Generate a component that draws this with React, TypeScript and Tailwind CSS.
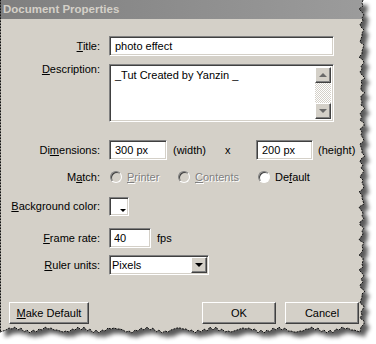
import React from "react";

const sunken =
  "border border-t-[#808080] border-l-[#808080] border-r-white border-b-white shadow-[inset_1px_1px_0_#404040,inset_-1px_-1px_0_#d4d0c8]";
const raised =
  "border border-t-white border-l-white border-r-[#404040] border-b-[#404040] shadow-[inset_-1px_-1px_0_#808080] bg-[#d4d0c8]";

// jagged "torn paper" outline of the screenshot
const tornPoints = () => {
  const pts: string[] = [];
  for (let y = 0; y <= 327; y += 3) {
    const x = 362 + Math.round(1.6 * Math.sin(y * 1.3) + 1.4 * Math.sin(y * 0.41 + 1));
    pts.push(`${x},${y}`);
  }
  for (let x = 360; x >= 0; x -= 3) {
    const y = 330 + Math.round(1.5 * Math.sin(x * 1.1) + 1.8 * Math.sin(x * 0.19 + 2));
    pts.push(`${x},${y}`);
  }
  return pts;
};

const TornEdge = () => {
  const pts = tornPoints();
  const shape = `M0,0 L${pts.join(" L")} Z`;
  const outside = `M0,0 H376 V344 H0 Z ${shape}`;
  const edge = `M${pts.join(" L")} L0.5,${pts[pts.length - 1].split(",")[1]} L0.5,0`;
  return (
    <svg className="absolute inset-0" width={376} height={344}>
      <defs>
        <clipPath id="out">
          <path d={outside} clipRule="evenodd" />
        </clipPath>
        <filter id="blur" x="-10%" y="-10%" width="120%" height="120%">
          <feGaussianBlur stdDeviation="2" />
        </filter>
      </defs>
      <path d={outside} fill="#fff" fillRule="evenodd" />
      <g clipPath="url(#out)">
        <path d={shape} transform="translate(5,5)" fill="#000" opacity="0.65" filter="url(#blur)" />
      </g>
      <path d={edge} fill="none" stroke="#111" strokeWidth="1" strokeDasharray="2 1" />
    </svg>
  );
};

const Radio = ({ disabled, label, k, rest }: { disabled?: boolean; label: string; k: string; rest: string }) => (
  <div className="flex items-center">
    <span
      className={`w-[12px] h-[12px] rounded-full border border-t-[#808080] border-l-[#808080] border-r-white border-b-white shadow-[inset_1px_1px_0_#404040] ${
        disabled ? "bg-[#d4d0c8]" : "bg-white"
      }`}
    />
    <span
      className={`ml-[5px] ${disabled ? "text-[#808080] [text-shadow:1px_1px_0_#fff]" : ""}`}
    >
      {label}
      <u>{k}</u>
      {rest}
    </span>
  </div>
);

const Label = ({ pre, k, rest }: { pre?: string; k: string; rest: string }) => (
  <span className="w-[100px] shrink-0 text-right">
    {pre}
    <u>{k}</u>
    {rest}
  </span>
);

export default function App() {
  return (
    <div className="relative w-[376px] h-[344px] bg-white overflow-hidden font-['Liberation_Sans',Arial,sans-serif] text-[11px] text-black leading-none">
      <div className="w-[368px] h-[338px] bg-[#d4d0c8] flex flex-col">
        {/* title bar */}
        <div className="h-[19px] bg-linear-to-r from-[#7f7f7f] to-[#9c9c9c] text-[#d4d0c8] font-bold text-[11.5px] px-[3px] flex items-center">
          Document Properties
        </div>

        {/* Title */}
        <div className="flex items-center mt-[17px] h-[20px]">
          <Label k="T" rest="itle:" />
          <input
            defaultValue="photo effect"
            className={`${sunken} ml-[9px] w-[225px] h-[20px] bg-white px-[5px] outline-none`}
          />
        </div>

        {/* Description */}
        <div className="flex items-start mt-[8px]">
          <Label k="D" rest="escription:" />
          <div className={`${sunken} ml-[9px] w-[225px] h-[58px] bg-white flex`}>
            <div className="flex-1 pl-[5px] pt-[5px]">_Tut Created by Yanzin _</div>
            <div className="w-[16px] my-[2px] mr-[2px] flex flex-col">
              <div className={`${raised} h-[16px] flex items-center justify-center`}>
                <span className="w-0 h-0 border-x-[4px] border-x-transparent border-b-[4px] border-b-[#6a6a6a]" />
              </div>
              <div className="flex-1 bg-[image:repeating-conic-gradient(#fff_0_25%,#d4d0c8_0_50%)] bg-[length:2px_2px]" />
              <div className={`${raised} h-[16px] flex items-center justify-center`}>
                <span className="w-0 h-0 border-x-[4px] border-x-transparent border-t-[4px] border-t-[#6a6a6a]" />
              </div>
            </div>
          </div>
        </div>

        {/* Dimensions */}
        <div className="flex items-center mt-[18px] h-[20px]">
          <Label pre="Di" k="m" rest="ensions:" />
          <input
            defaultValue="300 px"
            className={`${sunken} ml-[9px] w-[58px] h-[20px] bg-white px-[5px] outline-none`}
          />
          <span className="ml-[6px] w-[52px]">(width)</span>
          <span className="w-[31px]">x</span>
          <input
            defaultValue="200 px"
            className={`${sunken} w-[57px] h-[20px] bg-white px-[5px] outline-none`}
          />
          <span className="ml-[5px]">(height)</span>
        </div>

        {/* Match */}
        <div className="flex items-center mt-[10px] h-[14px]">
          <Label pre="M" k="a" rest="tch:" />
          <div className="ml-[10px] w-[68px]">
            <Radio disabled label="" k="P" rest="rinter" />
          </div>
          <div className="w-[80px]">
            <Radio disabled label="" k="C" rest="ontents" />
          </div>
          <Radio label="De" k="f" rest="ault" />
        </div>

        {/* Background color */}
        <div className="flex items-center mt-[12px] h-[20px]">
          <Label k="B" rest="ackground color:" />
          <div className={`${sunken} ml-[9px] w-[20px] h-[19px] bg-white relative`}>
            <span className="absolute right-[2px] bottom-[3px] w-0 h-0 border-x-[3px] border-x-transparent border-t-[3px] border-t-black" />
          </div>
        </div>

        {/* Frame rate */}
        <div className="flex items-center mt-[12px] h-[20px]">
          <Label k="F" rest="rame rate:" />
          <input
            defaultValue="40"
            className={`${sunken} ml-[9px] w-[42px] h-[20px] bg-white px-[4px] outline-none`}
          />
          <span className="ml-[6px]">fps</span>
        </div>

        {/* Ruler units */}
        <div className="flex items-center mt-[7px] h-[20px]">
          <Label k="R" rest="uler units:" />
          <div className={`${sunken} ml-[9px] w-[100px] h-[20px] bg-white flex items-center`}>
            <span className="flex-1 pl-[2px]">Pixels</span>
            <div className={`${raised} w-[16px] h-[16px] mr-[1px] flex items-center justify-center`}>
              <span className="w-0 h-0 border-x-[4px] border-x-transparent border-t-[4px] border-t-black" />
            </div>
          </div>
        </div>

        {/* buttons */}
        <div className="flex items-center mt-[27px] pl-[9px]">
          <button className={`${raised} w-[80px] h-[22px]`}>
            <u>M</u>ake Default
          </button>
          <button className={`${raised} w-[74px] h-[22px] ml-[113px]`}>OK</button>
          <button className={`${raised} w-[74px] h-[22px] ml-[9px]`}>Cancel</button>
        </div>
      </div>
      <TornEdge />
    </div>
  );
}
